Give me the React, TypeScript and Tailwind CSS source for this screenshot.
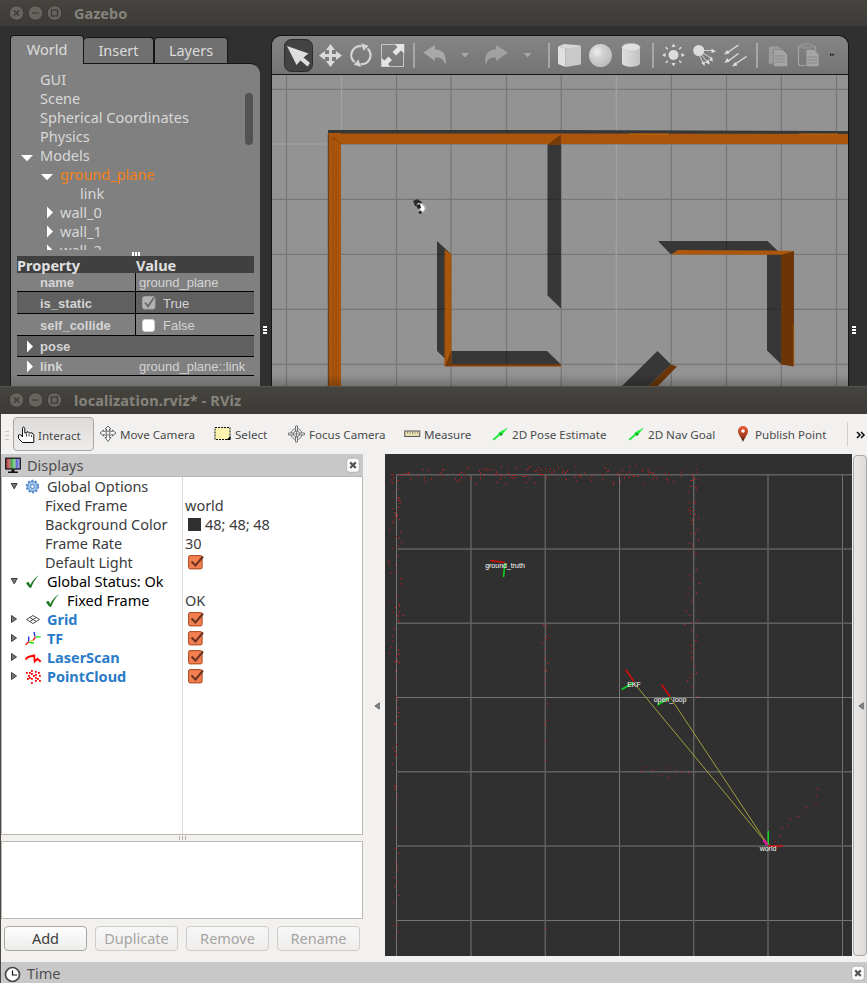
import React from 'react';

const UI = "font-['Noto_Sans','Open_Sans',sans-serif]";
const ARIAL = "font-['Liberation_Sans',Arial,sans-serif]";

/* ---------- shared window chrome ---------- */

function TitleBar({ title, className }: { title: string; className: string }) {
  return (
    <div className={`flex shrink-0 items-center bg-linear-to-b from-[#45443f] to-[#3c3b37] pl-[9px] ${className}`}>
      <svg width="56" height="16" viewBox="0 0 56 16" fill="none" className="shrink-0">
        <g fill="#66645f" stroke="#33322e" strokeWidth="0.8">
          <circle cx="7.5" cy="8" r="7.3" />
          <circle cx="26.5" cy="8" r="7.3" />
          <circle cx="45.5" cy="8" r="7.3" />
        </g>
        <g stroke="#383733" strokeWidth="1.2">
          <path d="M5 5.5l5 5M10 5.5l-5 5M23 8h7" />
          <rect x="42.5" y="5" width="6" height="6" />
        </g>
      </svg>
      <span className="ml-[9px] text-[14.5px] leading-5 font-bold whitespace-nowrap text-[#86837b]">{title}</span>
    </div>
  );
}

/* ---------- Gazebo ---------- */

type Arrow = 'down' | 'right' | null;

const worldTree: { label: string; pad: string; arrow: Arrow; color: string }[] = [
  { label: 'GUI', pad: 'pl-0', arrow: null, color: 'text-[#d8d8d8]' },
  { label: 'Scene', pad: 'pl-0', arrow: null, color: 'text-[#d8d8d8]' },
  { label: 'Spherical Coordinates', pad: 'pl-0', arrow: null, color: 'text-[#d8d8d8]' },
  { label: 'Physics', pad: 'pl-0', arrow: null, color: 'text-[#d8d8d8]' },
  { label: 'Models', pad: 'pl-0', arrow: 'down', color: 'text-[#d8d8d8]' },
  { label: 'ground_plane', pad: 'pl-5', arrow: 'down', color: 'text-[#f58113]' },
  { label: 'link', pad: 'pl-10', arrow: null, color: 'text-[#d8d8d8]' },
  { label: 'wall_0', pad: 'pl-5', arrow: 'right', color: 'text-[#d8d8d8]' },
  { label: 'wall_1', pad: 'pl-5', arrow: 'right', color: 'text-[#d8d8d8]' },
  { label: 'wall_2', pad: 'pl-5', arrow: 'right', color: 'text-[#d8d8d8]' },
];

function WhiteArrow({ dir }: { dir: Arrow }) {
  return (
    <svg width="20" height="19" viewBox="0 0 20 19" fill="#fff" className="shrink-0">
      {dir === 'down' && <path d="M1 9h12L7 15.3z" />}
      {dir === 'right' && <path d="M7 3.5v12l6-6z" />}
    </svg>
  );
}

function GazeboSide() {
  return (
    <div className="mt-[9px] flex w-[250px] shrink-0 flex-col">
      <div className="flex h-7 items-end">
        <div className="z-10 -mb-px flex h-[29px] w-[74px] items-center justify-center rounded-t-[4px] border border-b-0 border-[#151515] bg-[#808080] text-[14.5px] text-[#dcdcdc]">World</div>
        <div className="flex h-[26px] w-[70px] items-center justify-center rounded-t-[4px] border border-b-0 border-l-0 border-[#151515] bg-[#707070] text-[14.5px] text-[#dcdcdc]">Insert</div>
        <div className="flex h-[26px] w-[74px] items-center justify-center rounded-t-[4px] border border-b-0 border-[#151515] bg-[#707070] text-[14.5px] text-[#dcdcdc]">Layers</div>
      </div>
      <div className="flex h-[323px] flex-col rounded-tr-[10px] border-t border-l border-[#151515] bg-linear-to-b from-[#808080] from-[96%] to-[#727272]">
        <div className="mt-[6px] flex h-[180px] overflow-hidden pl-[9px]">
          <div className="grow">
            {worldTree.map((r) => (
              <div key={r.label} className={`flex h-[19px] ${r.pad}`}>
                <WhiteArrow dir={r.arrow} />
                <span className={`text-[14.5px] leading-[19px] whitespace-nowrap ${r.color}`}>{r.label}</span>
              </div>
            ))}
          </div>
          <div className="mt-[23px] mr-[7px] h-[52px] w-[8px] shrink-0 rounded-full bg-[#525252]" />
        </div>
        <div className="flex h-[6px] items-center justify-center gap-px pt-px">
          <i className="h-1 w-[2px] bg-white" />
          <i className="h-1 w-[2px] bg-white" />
          <i className="h-1 w-[2px] bg-white" />
        </div>
        <div className={`mr-[6px] ml-[6px] text-[13px] text-[#d4d4d4] ${ARIAL}`}>
          <div className={`flex h-[17px] bg-[#404040] text-[14.5px] leading-[18px] font-bold text-[#e0e0e0] ${UI}`}>
            <span className="w-[119px]">Property</span>
            <span>Value</span>
          </div>
          <div className="flex h-[19px] items-center border-b border-black">
            <b className="flex h-full w-[119px] items-center border-r border-black pt-[2px] pl-[23px]">name</b>
            <span className="pt-[2px] pl-[3px]">ground_plane</span>
          </div>
          <div className="flex h-[22px] items-center border-b border-black bg-[#606060]">
            <b className="flex h-full w-[119px] items-center border-r border-black pt-[2px] pl-[23px]">is_static</b>
            <svg width="14" height="14" viewBox="0 0 14 14" className="ml-[6px]">
              <rect x="0.5" y="0.5" width="12.5" height="12.5" rx="2" fill="#b4b4b4" stroke="#a0a0a0" />
              <path d="M3 6.5l3 4 6-9" fill="none" stroke="#696969" strokeWidth="1.7" />
            </svg>
            <span className="pt-[2px] pl-[7px]">True</span>
          </div>
          <div className="flex h-[22px] items-center border-b border-black">
            <b className="flex h-full w-[119px] items-center border-r border-black pt-[2px] pl-[23px]">self_collide</b>
            <i className="mt-px ml-[6px] size-[13px] rounded-[3px] border border-[#d0d0d0] bg-white" />
            <span className="pt-[2px] pl-[8px]">False</span>
          </div>
          <div className="flex h-[21px] items-center border-b border-black bg-[#606060]">
            <svg width="23" height="19" viewBox="3 0 23 19" fill="#fff"><path d="M13 3.5v12l6-6z" /></svg>
            <b className="pt-[2px]">pose</b>
          </div>
          <div className="flex h-[19px] items-center border-b border-black">
            <svg width="23" height="19" viewBox="3 0 23 19" fill="#fff"><path d="M13 3.5v12l6-6z" /></svg>
            <b className="w-[99px] pt-px">link</b>
            <span className="pt-px">ground_plane::link</span>
          </div>
        </div>
      </div>
    </div>
  );
}

function Handle({ className }: { className: string }) {
  return (
    <div className={`flex shrink-0 flex-col items-center pt-[300px] ${className}`}>
      <i className="h-[2px] w-1 bg-white" />
      <i className="mt-px h-[2px] w-1 bg-white" />
      <i className="mt-px h-[2px] w-1 bg-white" />
    </div>
  );
}

function GazeboToolbar() {
  return (
    <div className="flex h-[38px] shrink-0 overflow-hidden rounded-tr-[9px] bg-linear-to-b from-[#858585] to-[#747474]">
      {/* arrow */}
      <svg width="43" height="38" viewBox="272 36 43 38">
        <rect x="284.5" y="39.5" width="28" height="32" rx="7" fill="#434343" stroke="#2c2c2c" />
        <path d="M287 46l21.500 7.500-5 4 6.500 5.500-2.500 3.500-7-6-4 4.500z" fill="#dedede" />
      </svg>
      {/* move */}
      <svg width="32" height="38" viewBox="315 36 32 38" fill="#dadada">
        <path d="M330.500 44l4.500 6h-3v4h4v-3l6 4.500-6 4.500v-3h-4v4h3l-4.500 6-4.500-6h3v-4h-4v3l-6-4.500 6-4.500v3h4v-4h-3z" />
      </svg>
      {/* rotate */}
      <svg width="28" height="38" viewBox="347 36 28 38" fill="none" stroke="#d6d6d6" strokeWidth="2.200">
        <path d="M354.500 62a9 9 0 0 1 7-15.800M367.500 48.500a9 9 0 0 1-7 15.600" />
        <path d="M361 43.200l7.500 2.500-5 5zM361 67l-7.500-2.500 5-5z" fill="#d6d6d6" stroke="none" />
      </svg>
      {/* scale */}
      <svg width="34" height="38" viewBox="375 36 34 38" fill="none">
        <path d="M391 44.500h13v11M381.500 54v12.500h12" stroke="#b8b8b8" />
        <path d="M391 44.500h-9.500v11M403.500 55v11.500h-11" stroke="#c8c8c8" />
        <path d="M404 44v9.500l-3-3-5 5-3.500-3.500 5-5-3-3zM381.500 66.500V58l3 2.500 4-4 3.500 3.500-4 4 2.500 2.500z" fill="#e4e4e4" />
      </svg>
      <svg width="12" height="38" viewBox="409 36 12 38"><path d="M414 43v25" stroke="#b4b4b4" strokeWidth="1.500" /></svg>
      {/* undo / redo */}
      <svg width="122" height="38" viewBox="421 36 122 38" fill="#a8a8a8">
        <path d="M423 52.500l12-7.500v4.500c8 0 12 5 10.500 15.500-2-6-4.500-8-10.500-7.500V61z" />
        <path d="M461 53h8l-4 4.500z" />
        <path d="M508 52.500L496 45v4.500c-8 0-12 5-10.500 15.500 2-6 4.500-8 10.500-7.500V61z" opacity="0.850" />
        <path d="M523.500 53h8l-4 4.500z" />
      </svg>
      <svg width="12" height="38" viewBox="543 36 12 38"><path d="M549 43v25" stroke="#b4b4b4" strokeWidth="1.500" /></svg>
      {/* primitives */}
      <svg width="93" height="38" viewBox="555 36 93 38">
        <defs>
          <radialGradient id="ball" cx="0.350" cy="0.350" r="0.700">
            <stop offset="0" stopColor="#efefef" />
            <stop offset="0.350" stopColor="#d4d4d4" />
            <stop offset="1" stopColor="#bcbcbc" />
          </radialGradient>
          <linearGradient id="tube">
            <stop offset="0" stopColor="#dedede" />
            <stop offset="1" stopColor="#c2c2c2" />
          </linearGradient>
        </defs>
        <path d="M558 46.500l7.500 2V67l-7.500-3z" fill="#e0e0e0" />
        <path d="M558 46.500l6-2.500 17 1.500-5 3h-10.500z" fill="#d8d8d8" />
        <path d="M565.500 48.500l15.500-2.500v18.500l-15.500 2.500z" fill="#c9c9c9" />
        <circle cx="600.500" cy="55.500" r="11.500" fill="url(#ball)" />
        <path d="M622 47v16c0 5 18 5 18 0V47z" fill="url(#tube)" />
        <ellipse cx="631" cy="47.300" rx="9" ry="3.800" fill="#e0e0e0" stroke="#c0c0c0" strokeWidth="0.500" />
      </svg>
      <svg width="10" height="38" viewBox="648 36 10 38"><path d="M653 43v25" stroke="#b4b4b4" strokeWidth="1.500" /></svg>
      {/* lights */}
      <svg width="94" height="38" viewBox="658 36 94 38" fill="#dcdcdc" stroke="#dcdcdc">
        <circle cx="673.500" cy="55" r="5" stroke="none" />
        <path d="M673.500 47v-2M673.500 63v2M665.500 55h-2M681.500 55h2M667.800 49.300l-2-2M679.200 60.700l2 2M679.200 49.300l2-2M667.800 60.700l-2 2" strokeWidth="1.500" />
        <path d="M671.500 47h4l-2-3.500zM671.500 63h4l-2 3.500zM665.500 53v4l-3.500-2zM681.500 53v4l3.500-2z" stroke="none" />
        <circle cx="698.700" cy="50.500" r="5.500" stroke="none" />
        <path d="M704 50.500h8M703 53l8 5M701.500 55l6 7M699.500 56l3.500 6" strokeWidth="0.900" />
        <path d="M711.500 48.500v4.500l4.500-1.500zM709 60l4 1.500-1-5zM705 62.500l5 2-1.500-5zM701 62.500l4-1-.5 4.500z" stroke="none" />
        <path d="M738.500 45l-11 7.500M738.500 53.500l-11 8M746.500 56.500l-12 8" strokeWidth="1.500" />
        <path d="M724 54.500l3-4.500 2.500 3.500zM724.500 63l2.500-5 3 3.500zM732 66.500l3-4.500 2.500 3.500z" stroke="none" />
      </svg>
      <svg width="10" height="38" viewBox="752 36 10 38"><path d="M757 43v25" stroke="#b4b4b4" strokeWidth="1.500" /></svg>
      {/* copy / paste */}
      <svg width="84" height="38" viewBox="762 36 84 38" stroke="#7d7d7d" strokeWidth="0.700">
        <path d="M768.500 46h10l4 4v14h-14z" fill="#9c9c9c" />
        <path d="M773.500 49.500h9l5 5v12h-14z" fill="#a5a5a5" />
        <path d="M775 56h10M775 59h10M775 62h10" />
        <rect x="798.500" y="46" width="17" height="19.500" rx="2" fill="none" stroke="#a3a3a3" strokeWidth="1.200" />
        <rect x="801" y="44" width="11" height="4" rx="2" fill="#858585" stroke="#a3a3a3" />
        <path d="M806 49.500h8l5 5v12h-13z" fill="#a5a5a5" />
        <path d="M807.500 57h10M807.500 60h10M807.500 63h10" />
        <path d="M830 54.800h1.500M832.300 54.800h1.500" stroke="#222" strokeWidth="2" />
      </svg>
    </div>
  );
}

function GazeboScene() {
  return (
    <div className="border-t border-[#151515]">
      <svg width="576" height="311" viewBox="272 75 576 311" className="block">
        <defs>
          <pattern id="hatch" width="7" height="3" patternUnits="userSpaceOnUse">
            <rect width="7" height="3" fill="#ac570b" />
            <path d="M0 1h3M4 2.500h2" stroke="#964c0a" strokeWidth="0.600" />
          </pattern>
          <linearGradient id="shade" x1="0" y1="0" x2="0" y2="1">
            <stop offset="0" stopColor="#000" stopOpacity="0" />
            <stop offset="1" stopColor="#000" stopOpacity="0.220" />
          </linearGradient>
        </defs>
        <rect x="272" y="75" width="576" height="311" fill="#939393" />
        <path d="M286.500 75v311M396.500 75v311M451 75v311M506.500 75v311M561.200 75v311M671.300 75v311M726.500 75v311M781.400 75v311M836.500 75v311" stroke="#777" strokeWidth="1.200" />
        <path d="M272 89.300h576M272 199.300h576M272 254.300h576M272 309.300h576M272 364.300h576" stroke="#777" strokeWidth="1.200" />
        <path d="M272 144h57M341.500 75v58" stroke="#a3a3a3" strokeWidth="1.200" />
        <path d="M341 144.300h507" stroke="#7b7b7b" />
        <path d="M616.300 75v311" stroke="#9fab9f" strokeWidth="1" />
        <path d="M615.500 83v37M615.500 242v60" stroke="#83bb83" strokeWidth="0.800" strokeDasharray="1 5" />

        <path d="M328 130h228l292 1v4H328z" fill="#373737" />
        <path d="M328 133h13v253h-13z" fill="url(#hatch)" />
        <path d="M329 133.500h228l291 .5v10H329z" fill="url(#hatch)" />
        <path d="M328.300 134v252" stroke="#5a3a1c" />
        <path d="M333 137l8 7" stroke="#6f3908" strokeWidth="0.900" />
        <path d="M333 137v249M336 150v236" stroke="#964c0a" strokeWidth="0.700" />
        <path d="M629 134h40M799 134h39" stroke="#cf6a08" strokeWidth="0.800" />

        <path d="M547.500 145h13.500v163.500l-13.500-13z" fill="#373737" />
        <path d="M547 145l14-10.500V145z" fill="#743c0a" />

        <path d="M437 241l14 13v110l-14-13z" fill="#373737" />
        <path d="M451 351h96l14 13.500H451z" fill="#373737" />
        <path d="M444.700 250l6.500 4v112h-6.500z" fill="url(#hatch)" stroke="#9b4e0b" strokeWidth="0.500" />
        <path d="M445 366.300l6-15V364h110v2.300z" fill="#743806" />
        <path d="M451 366.300h110" stroke="#b25c25" strokeWidth="0.600" />

        <path d="M658 241h109.500l13 12.500-110 .5z" fill="#373737" />
        <path d="M767 254h14.500v110.500l-14.500-14z" fill="#373737" />
        <path d="M781 254l13-3v115.500l-13-2z" fill="#6b3507" />
        <path d="M671 254.500l7-4.500 116 .8-12 4z" fill="#ac570b" />
        <path d="M793.700 325v41" stroke="#b1620b" strokeWidth="0.700" />

        <path d="M657.500 351l13.500 13.500-22 21.500h-27z" fill="#373737" />
        <path d="M671 364.500l6 2L658 386h-9z" fill="#6b3507" />
        <path d="M437 254.300h8M437 309.300h8M547.500 199.300h13M547.500 254.300h13M767 309.300h14M506.500 351v13M726.500 241v9" stroke="#2c2c2c" />

        <path d="M413 201l4-2 5 3-1 5-6-1z" fill="#2b2b2b" />
        <ellipse cx="422" cy="208" rx="4.500" ry="4.800" fill="#a5a5a5" />
        <path d="M418 203l4 1 3 4-2 4-3-3v-2l-4-1z" fill="#fff" />
        <path d="M416 205l4-1 1 4-3 1zM418 212l3-1 1 2-2 1z" fill="#1f1f1f" />
        <rect x="272" y="374" width="576" height="12" fill="url(#shade)" />
      </svg>
    </div>
  );
}

function Gazebo() {
  return (
    <section className="flex h-[386px] flex-col overflow-hidden bg-[#303030]">
      <TitleBar title="Gazebo" className="h-[26px]" />
      <div className="flex h-[360px] pl-[10px]">
        <GazeboSide />
        <Handle className="w-[11px] pr-px" />
        <div className="mt-[9px] flex h-[351px] w-[578px] shrink-0 flex-col overflow-hidden rounded-t-[10px] border border-b-0 border-[#151515]">
          <GazeboToolbar />
          <GazeboScene />
        </div>
        <Handle className="w-[10px]" />
      </div>
    </section>
  );
}

/* ---------- RViz ---------- */

function Tool({ className, label, children }: { className: string; label: string; children: React.ReactNode }) {
  return (
    <div className={`flex shrink-0 items-center text-[11.6px] whitespace-nowrap text-[#4a4a4a] ${className}`}>
      {children}
      <span className="mt-px">{label}</span>
    </div>
  );
}

function GreenArrow() {
  return (
    <svg width="20" height="16" viewBox="0 0 20 16" className="shrink-0">
      <path d="M0.500 13.200l6-5.200.5-1.500L16 1.500l-5.500 6.500-2.500 1.500-6.500 5z" fill="#16ef33" />
      <path d="M7 7l4 1-2 2z" fill="#0c8a1e" />
    </svg>
  );
}

function RvizToolbar() {
  return (
    <div className="flex h-[40px] shrink-0 bg-[#f2f1f0] pt-[3px]">
      <div className="mt-[14px] ml-1 flex w-[4px] flex-col gap-[3px]">
        <i className="h-px bg-[#c9c7c5]" />
        <i className="h-px bg-[#c9c7c5]" />
        <i className="h-px bg-[#c9c7c5]" />
      </div>
      <Tool label="Interact" className="ml-[4px] h-[34px] w-[81px] rounded-[4px] border border-[#a8a6a3] bg-linear-to-b from-[#dddbd9] to-[#eeedeb] pt-[2px] pl-[3px]">
        <svg width="21" height="18" viewBox="0 0 21 18" className="shrink-0">
          <path d="M5.500 10V2.500Q5.500 1 6.500 1T7.800 2.500V7h2V6q1.500-1 2 .5v.5h2q1.500-1 2 1l1 .5V16.500H5.500L1.500 12.500V9q1.500-1 2.500 0l1.500 2z" fill="#fff" stroke="#111" strokeWidth="1" />
          <path d="M9.500 8v2.500M12 8v2.500M14.500 9v2" stroke="#111" strokeWidth="0.800" />
        </svg>
      </Tool>
      <Tool label="Move Camera" className="ml-[5px] h-[34px] w-[109px]">
        <svg width="21" height="18" viewBox="0 0 21 18" className="shrink-0" fill="#f4f4f4" stroke="#5a5a5a" strokeWidth="0.900">
          <path d="M9 1l3 3h-1.500v2l3 .5V5l3.500 3-3.500 3V9.500l-3 1v2H12l-3 4-3-4h1.500v-2l-3-1V11L1 8l3.500-3v1.500l3-.5V4H6z" />
          <circle cx="9" cy="8" r="2" />
        </svg>
      </Tool>
      <Tool label="Select" className="ml-[6px] h-[34px] w-[74px]">
        <svg width="21" height="16" viewBox="0 0 21 16" className="shrink-0">
          <rect x="1" y="1.500" width="15" height="12" fill="#fdf3b0" stroke="#111" strokeDasharray="2 1" />
          <path d="M16.500 10v4h-4z" fill="#000" />
        </svg>
      </Tool>
      <Tool label="Focus Camera" className="h-[34px] w-[116px]">
        <svg width="21" height="18" viewBox="0 0 21 18" className="shrink-0" fill="none" stroke="#6b6b6b" strokeWidth="0.900">
          <circle cx="8.500" cy="9" r="5.500" />
          <circle cx="8.500" cy="9" r="3" />
          <path d="M7.500 1h2v5h-2zM7.500 12h2v5h-2zM0.500 8h5v2h-5zM11.500 8h5v2h-5z" fill="#f2f1f0" />
          <path d="M8.500 7v4M6.500 9h4" />
        </svg>
      </Tool>
      <Tool label="Measure" className="h-[34px] w-[88px]">
        <svg width="20" height="10" viewBox="0 0 20 10" className="shrink-0">
          <rect x="0.700" y="2" width="15" height="5.500" fill="#e9dfae" stroke="#555" />
          <path d="M3.500 2v2.500M6 2v2.500M8.500 2v3M11 2v2.500M13.500 2v2.500" stroke="#888" strokeWidth="0.900" />
        </svg>
      </Tool>
      <Tool label="2D Pose Estimate" className="h-[34px] w-[136px]"><GreenArrow /></Tool>
      <Tool label="2D Nav Goal" className="h-[34px] w-[107px]"><GreenArrow /></Tool>
      <Tool label="Publish Point" className="h-[34px] w-[112px]">
        <svg width="20" height="18" viewBox="0 0 20 18" className="shrink-0">
          <defs>
            <linearGradient id="pin" x1="0" y1="0" x2="0" y2="1">
              <stop offset="0" stopColor="#ef5a34" />
              <stop offset="0.600" stopColor="#a83c1e" />
              <stop offset="1" stopColor="#38200f" />
            </linearGradient>
          </defs>
          <path d="M8 17C6 12 3 9.500 3 6a5 5 0 0 1 10 0c0 3.500-3 6-5 11z" fill="url(#pin)" />
          <circle cx="8" cy="6" r="1.800" fill="#fff" />
        </svg>
      </Tool>
      <i className="mt-[5px] h-6 w-px bg-[#d0cecb]" />
      <svg width="18" height="34" viewBox="0 0 18 34" fill="none" stroke="#111" strokeWidth="1.600">
        <path d="M9 15l3 3-3 3M13 15l3 3-3 3" />
      </svg>
    </div>
  );
}

function CloseBox() {
  return (
    <svg width="14" height="16" viewBox="0 0 14 16" className="shrink-0">
      <rect x="0.700" y="1.200" width="12.600" height="14" rx="3" fill="#fbfbfb" stroke="#a5a39f" strokeWidth="0.700" />
      <path d="M4.200 5.400l5.600 5.600M9.800 5.400l-5.600 5.600" stroke="#555" strokeWidth="2.200" />
    </svg>
  );
}

function OrangeCheck() {
  return (
    <svg width="17" height="17" viewBox="0 0 17 17" className="shrink-0">
      <rect x="0.600" y="1.600" width="13.500" height="13.300" rx="1.500" fill="#f37e50" stroke="#a9451c" />
      <path d="M3.500 7.500l4 4L15 2.500" fill="none" stroke="#6b3322" strokeWidth="2" />
    </svg>
  );
}

function GreyArrow({ open }: { open?: boolean }) {
  return (
    <svg width="8" height="19" viewBox="0 0 8 19" className="shrink-0">
      <path d={open ? 'M1.200 6.500h6L4.200 11.800z' : 'M1.500 5.500l5 3.500-5 3.500z'} fill="#777" stroke="#3e3e3e" />
    </svg>
  );
}

const icons = {
  gear: (
    <g>
      <circle cx="7.500" cy="7.500" r="5.800" fill="#a9c8ea" stroke="#4a84c6" strokeWidth="1.800" strokeDasharray="2 1.640" />
      <circle cx="7.500" cy="7.500" r="4.800" fill="#a6c6ea" stroke="#4a84c6" strokeWidth="0.800" />
      <circle cx="7.500" cy="7.500" r="2" fill="#e8f0fa" stroke="#4a84c6" />
    </g>
  ),
  check: <path d="M1 9.300Q2.500 7.700 3.700 8l1.500 3Q8.500 4.500 14 1.300 9 6 6.200 13.800H4.400z" fill="#1d7a22" />,
  grid: <path d="M8 3.500l6.500 4L8 11.500l-6.500-4zM4.800 5.500l6.500 4M11.300 5.500l-6.500 4" fill="none" stroke="#4a4a4a" />,
  tf: (
    <g fill="none" strokeWidth="1.300">
      <path d="M3.700 5.500v5M9 0.800l1 4.500" stroke="#2222f0" />
      <path d="M3.700 10.800L0.700 13.800M10.500 6L8 9.500" stroke="#f01010" />
      <path d="M4 11.300l5 .7M10.700 5.800h5" stroke="#0be00b" />
      <path d="M4.500 10.500l4-1.500" stroke="#e8c520" />
    </g>
  ),
  laser: <path d="M0.500 9.500l2-2.200L5 6.500l4.200-1 .5 6 2.800-2.700 3.200 3" fill="none" stroke="#f00" strokeWidth="1.900" />,
  cloud: (
    <g fill="#f00">
      {[[1, 3], [3, 6], [6, 1], [6, 4], [10, 2], [13, 3], [4, 8], [8, 6], [10, 5], [14, 6], [2, 9], [6, 9], [10, 8], [10, 11], [14, 11], [6, 13], [12, 9], [4, 3]].map(([x, y]) => (
        <rect key={`${x}-${y}`} x={x} y={y} width="1.800" height="1.800" />
      ))}
    </g>
  ),
};

function Icon16({ name }: { name: keyof typeof icons }) {
  return <svg width="17" height="16" viewBox="0 0 17 16" className="shrink-0">{icons[name]}</svg>;
}

function TreeRow({ left, value }: { left: React.ReactNode; value?: React.ReactNode }) {
  return (
    <div className="flex h-[19px] items-center text-[14.5px] leading-[19px] tracking-[-0.02px] whitespace-nowrap text-[#3c3c3c]">
      <div className="flex h-full w-[181px] shrink-0 items-center">{left}</div>
      <div className="flex h-full items-center pl-[2px]">{value}</div>
    </div>
  );
}

const displayItems: { label: string; icon: keyof typeof icons }[] = [
  { label: 'Grid', icon: 'grid' },
  { label: 'TF', icon: 'tf' },
  { label: 'LaserScan', icon: 'laser' },
  { label: 'PointCloud', icon: 'cloud' },
];

function DisplaysTree() {
  const check = <span className="ml-[3px] flex"><OrangeCheck /></span>;
  return (
    <div className="flex h-[359px] flex-col border border-[#bab7b3] bg-white bg-[linear-gradient(#dcdcdc,#dcdcdc)] bg-[length:1px_100%] bg-[position:180px_0] bg-no-repeat">
      <div>
        <TreeRow left={<><span className="ml-[8px] flex"><GreyArrow open /></span><span className="mr-[5px] ml-[7px] flex"><Icon16 name="gear" /></span>Global Options</>} />
        <TreeRow left={<span className="ml-[43px]">Fixed Frame</span>} value="world" />
        <TreeRow left={<span className="ml-[43px]">Background Color</span>} value={<><i className="mr-[4px] ml-[3px] size-[13px] bg-[#303030]" />48; 48; 48</>} />
        <TreeRow left={<span className="ml-[43px]">Frame Rate</span>} value="30" />
        <TreeRow left={<span className="ml-[43px]">Default Light</span>} value={check} />
        <TreeRow left={<><span className="ml-[8px] flex"><GreyArrow open /></span><span className="mr-[5px] ml-[7px] flex"><Icon16 name="check" /></span><span className="text-black">Global Status: Ok</span></>} />
        <TreeRow left={<><span className="mr-[5px] ml-[43px] flex"><Icon16 name="check" /></span><span className="text-black">Fixed Frame</span></>} value="OK" />
        {displayItems.map((d) => (
          <TreeRow
            key={d.label}
            left={<><span className="ml-[8px] flex"><GreyArrow /></span><span className="mr-[5px] ml-[7px] flex"><Icon16 name={d.icon} /></span><b className="text-[#2a7bc8]">{d.label}</b></>}
            value={check}
          />
        ))}
      </div>
    </div>
  );
}

function PanelButton({ label, enabled }: { label: string; enabled?: boolean }) {
  return (
    <button className={`flex h-[25px] w-[83px] items-center justify-center rounded-[4px] border text-[14.5px] leading-none ${enabled ? 'border-[#aaa7a3] bg-linear-to-b from-white to-[#ececeb] text-[#3c3c3c]' : 'border-[#cfcdca] bg-linear-to-b from-[#f8f7f7] to-[#efeeed] text-[#a5a4a2]'}`}>
      {label}
    </button>
  );
}

function DisplaysPanel() {
  return (
    <div className="flex w-[362px] shrink-0 flex-col">
      <div className="flex h-[22px] items-center bg-[#c8c8c8] pr-[3px] pl-[3px]">
        <svg width="18" height="18" viewBox="0 0 18 18">
          <defs>
            <linearGradient id="screen">
              <stop offset="0" stopColor="#a03c3c" />
              <stop offset="0.300" stopColor="#d98080" />
              <stop offset="0.350" stopColor="#3f9c4c" />
              <stop offset="0.650" stopColor="#9cdc9c" />
              <stop offset="0.700" stopColor="#5a5ac8" />
              <stop offset="1" stopColor="#b4b4f0" />
            </linearGradient>
          </defs>
          <rect x="1.700" y="2.200" width="14.600" height="10.800" fill="url(#screen)" stroke="#111" strokeWidth="1.200" />
          <path d="M7.500 13.500h3v2H14v1.500H4v-1.500h3.500z" fill="#111" />
        </svg>
        <span className="ml-[5px] text-[14.5px] leading-[22px] text-[#4f4f4f]">Displays</span>
        <span className="ml-auto flex"><CloseBox /></span>
      </div>
      <DisplaysTree />
      <div className="flex h-[6px] items-center justify-center gap-[2px]">
        <i className="h-1 w-px bg-[#b5b2ae]" />
        <i className="h-1 w-px bg-[#b5b2ae]" />
        <i className="h-1 w-px bg-[#b5b2ae]" />
      </div>
      <div className="h-[78px] border border-[#bab7b3] bg-white" />
      <div className="mt-[7px] flex gap-[8px] pl-[3px]">
        <PanelButton label="Add" enabled />
        <PanelButton label="Duplicate" />
        <PanelButton label="Remove" />
        <PanelButton label="Rename" />
      </div>
    </div>
  );
}

/* laser returns, in map pixels */
const interiorPoints: [number, number][] = [
  [689, 543], [692, 545], [689, 549], [695, 553], [696, 569], [689, 575], [698, 583], [692, 578], [689, 588], [687, 594], [696, 592], [692, 598], [691, 601], [686, 610], [698, 610], [689, 615], [697, 620], [692, 623], [684, 624], [691, 629], [696, 635], [695, 640], [691, 645], [693, 648], [690, 652], [691, 656], [691, 660], [694, 666], [696, 672], [692, 674], [689, 677], [687, 680], [692, 687], [697, 696],
  [543, 624], [546, 624], [545, 627], [546, 635], [549, 637], [545, 639], [542, 642], [544, 648], [544, 658], [547, 662], [545, 668], [543, 669], [546, 670], [544, 678], [544, 684], [547, 703], [546, 720], [544, 724], [545, 740], [545, 760], [545, 928],
  [641, 770], [645, 767], [652, 770], [666, 767], [675, 770], [681, 771], [688, 772], [661, 775], [668, 777],
  [817, 788], [816, 796], [815, 804], [806, 806], [802, 810], [797, 816], [790, 818], [788, 825], [781, 827], [779, 835], [775, 841],
];

function noise(seed: number) {
  const v = Math.sin(seed * 127.1) * 43758.5453;
  return v - Math.floor(v);
}

const wallPoints: [number, number][] = [
  ...Array.from({ length: 150 }, (_, i): [number, number] => [397 + noise(i + 1) * 303, 474 + (noise(i + 301) + noise(i + 601) - 1) * 10]),
  ...Array.from({ length: 65 }, (_, i): [number, number] => [395 + (noise(i + 11) + noise(i + 411) - 1) * 9, 474 + noise(i + 901) * 190]),
  ...Array.from({ length: 38 }, (_, i): [number, number] => [396 + (noise(i + 71) - 0.6) * 6, 660 + noise(i + 941) * 290]),
  ...Array.from({ length: 26 }, (_, i): [number, number] => [693 + (noise(i + 81) - 0.5) * 11, 477 + noise(i + 991) * 65]),
];

function RvizView() {
  return (
    <svg width="467" height="502" viewBox="385 454 467 502" className="block shrink-0">
      <rect x="385" y="454" width="467" height="502" fill="#303030" />
      <path d="M396.500 474v482M619.500 474v482M842.500 474v482M396 697.500h456M396 920.500h456" stroke="#747474" fill="none" />
      <path d="M471 474v482M545.300 474v482M693.700 474v482M768 474v482M396 474.700h456M396 549h456M396 623.200h456M396 771.800h456M396 846h456" stroke="#606060" strokeWidth="1.500" fill="none" />
      <g fill="#c01f1f">
        {[...wallPoints, ...interiorPoints].map(([x, y], i) => (
          <rect key={i} x={Math.round(x)} y={Math.round(y)} width={i % 3 === 0 ? 2 : 1} height={i % 3 === 1 ? 2 : 1} fillOpacity={i % 3 === 2 ? 1 : 0.75} />
        ))}
      </g>
      <path d="M634 683L768 845M670 697L768 845" stroke="#a3a03c" fill="none" />
      <g fill="none" strokeWidth="1.600">
        <path d="M490 560.500l15 2M625.500 669.500l8.500 12M661.500 684.500l8.500 12M768 846h15" stroke="#d40b0b" />
        <path d="M505 563l-1.500 14M633 683l-11.500 6.500M669 698l-11.500 7M768.300 831v14" stroke="#0fd01f" />
        <path d="M763.500 840l4 5" stroke="#e0189a" strokeWidth="2.500" />
      </g>
      <g fill="#fff" className={`text-[7px] ${ARIAL}`} textAnchor="middle">
        <text x="505" y="568">ground_truth</text>
        <text x="634" y="687">EKF</text>
        <text x="670" y="702">open_loop</text>
        <text x="768" y="851">world</text>
      </g>
    </svg>
  );
}

function SideArrow() {
  return (
    <svg width="6" height="8" viewBox="0 0 6 8"><path d="M5.300 0.800v6.400L0.900 4z" fill="#858585" stroke="#5c5c5c" strokeWidth="0.800" /></svg>
  );
}

function Rviz() {
  return (
    <section className="flex h-[597px] flex-col bg-[#f2f1f0]">
      <TitleBar title="localization.rviz* - RViz" className="h-[28px] border-t border-[#55534d] pb-px tracking-[0.13px]" />
      <div className="flex grow flex-col border-l border-[#4a4946]">
        <RvizToolbar />
        <div className="flex h-[508px]">
          <DisplaysPanel />
          <div className="flex w-[22px] shrink-0 justify-end pt-[248px] pr-[5px]"><SideArrow /></div>
          <RvizView />
          <div className="mt-px ml-[1px] flex h-[501px] w-[14px] shrink-0 items-start justify-end rounded-[4px] border border-[#aaa8a5] bg-linear-to-r from-[#e9e8e7] to-[#dddbd9] pt-[246px] pr-[2px]"><SideArrow /></div>
        </div>
        <div className="flex h-[21px] items-center bg-[#c8c8c8] pr-[2px] pl-[3px]">
          <svg width="17" height="17" viewBox="0 0 17 17" className="mt-[3px]">
            <circle cx="8.500" cy="8.500" r="7" fill="#fff" stroke="#4a4a4a" strokeWidth="1.700" />
            <path d="M8.500 4.500v4.500H13" fill="none" stroke="#111" strokeWidth="1.200" />
          </svg>
          <span className="ml-[6px] pt-px text-[14.5px] leading-[20px] text-[#4f4f4f]">Time</span>
          <span className="ml-auto flex"><CloseBox /></span>
        </div>
      </div>
    </section>
  );
}

export default function App() {
  return (
    <main className={`h-[983px] w-[867px] overflow-hidden bg-[#303030] ${UI}`}>
      <Gazebo />
      <Rviz />
    </main>
  );
}
